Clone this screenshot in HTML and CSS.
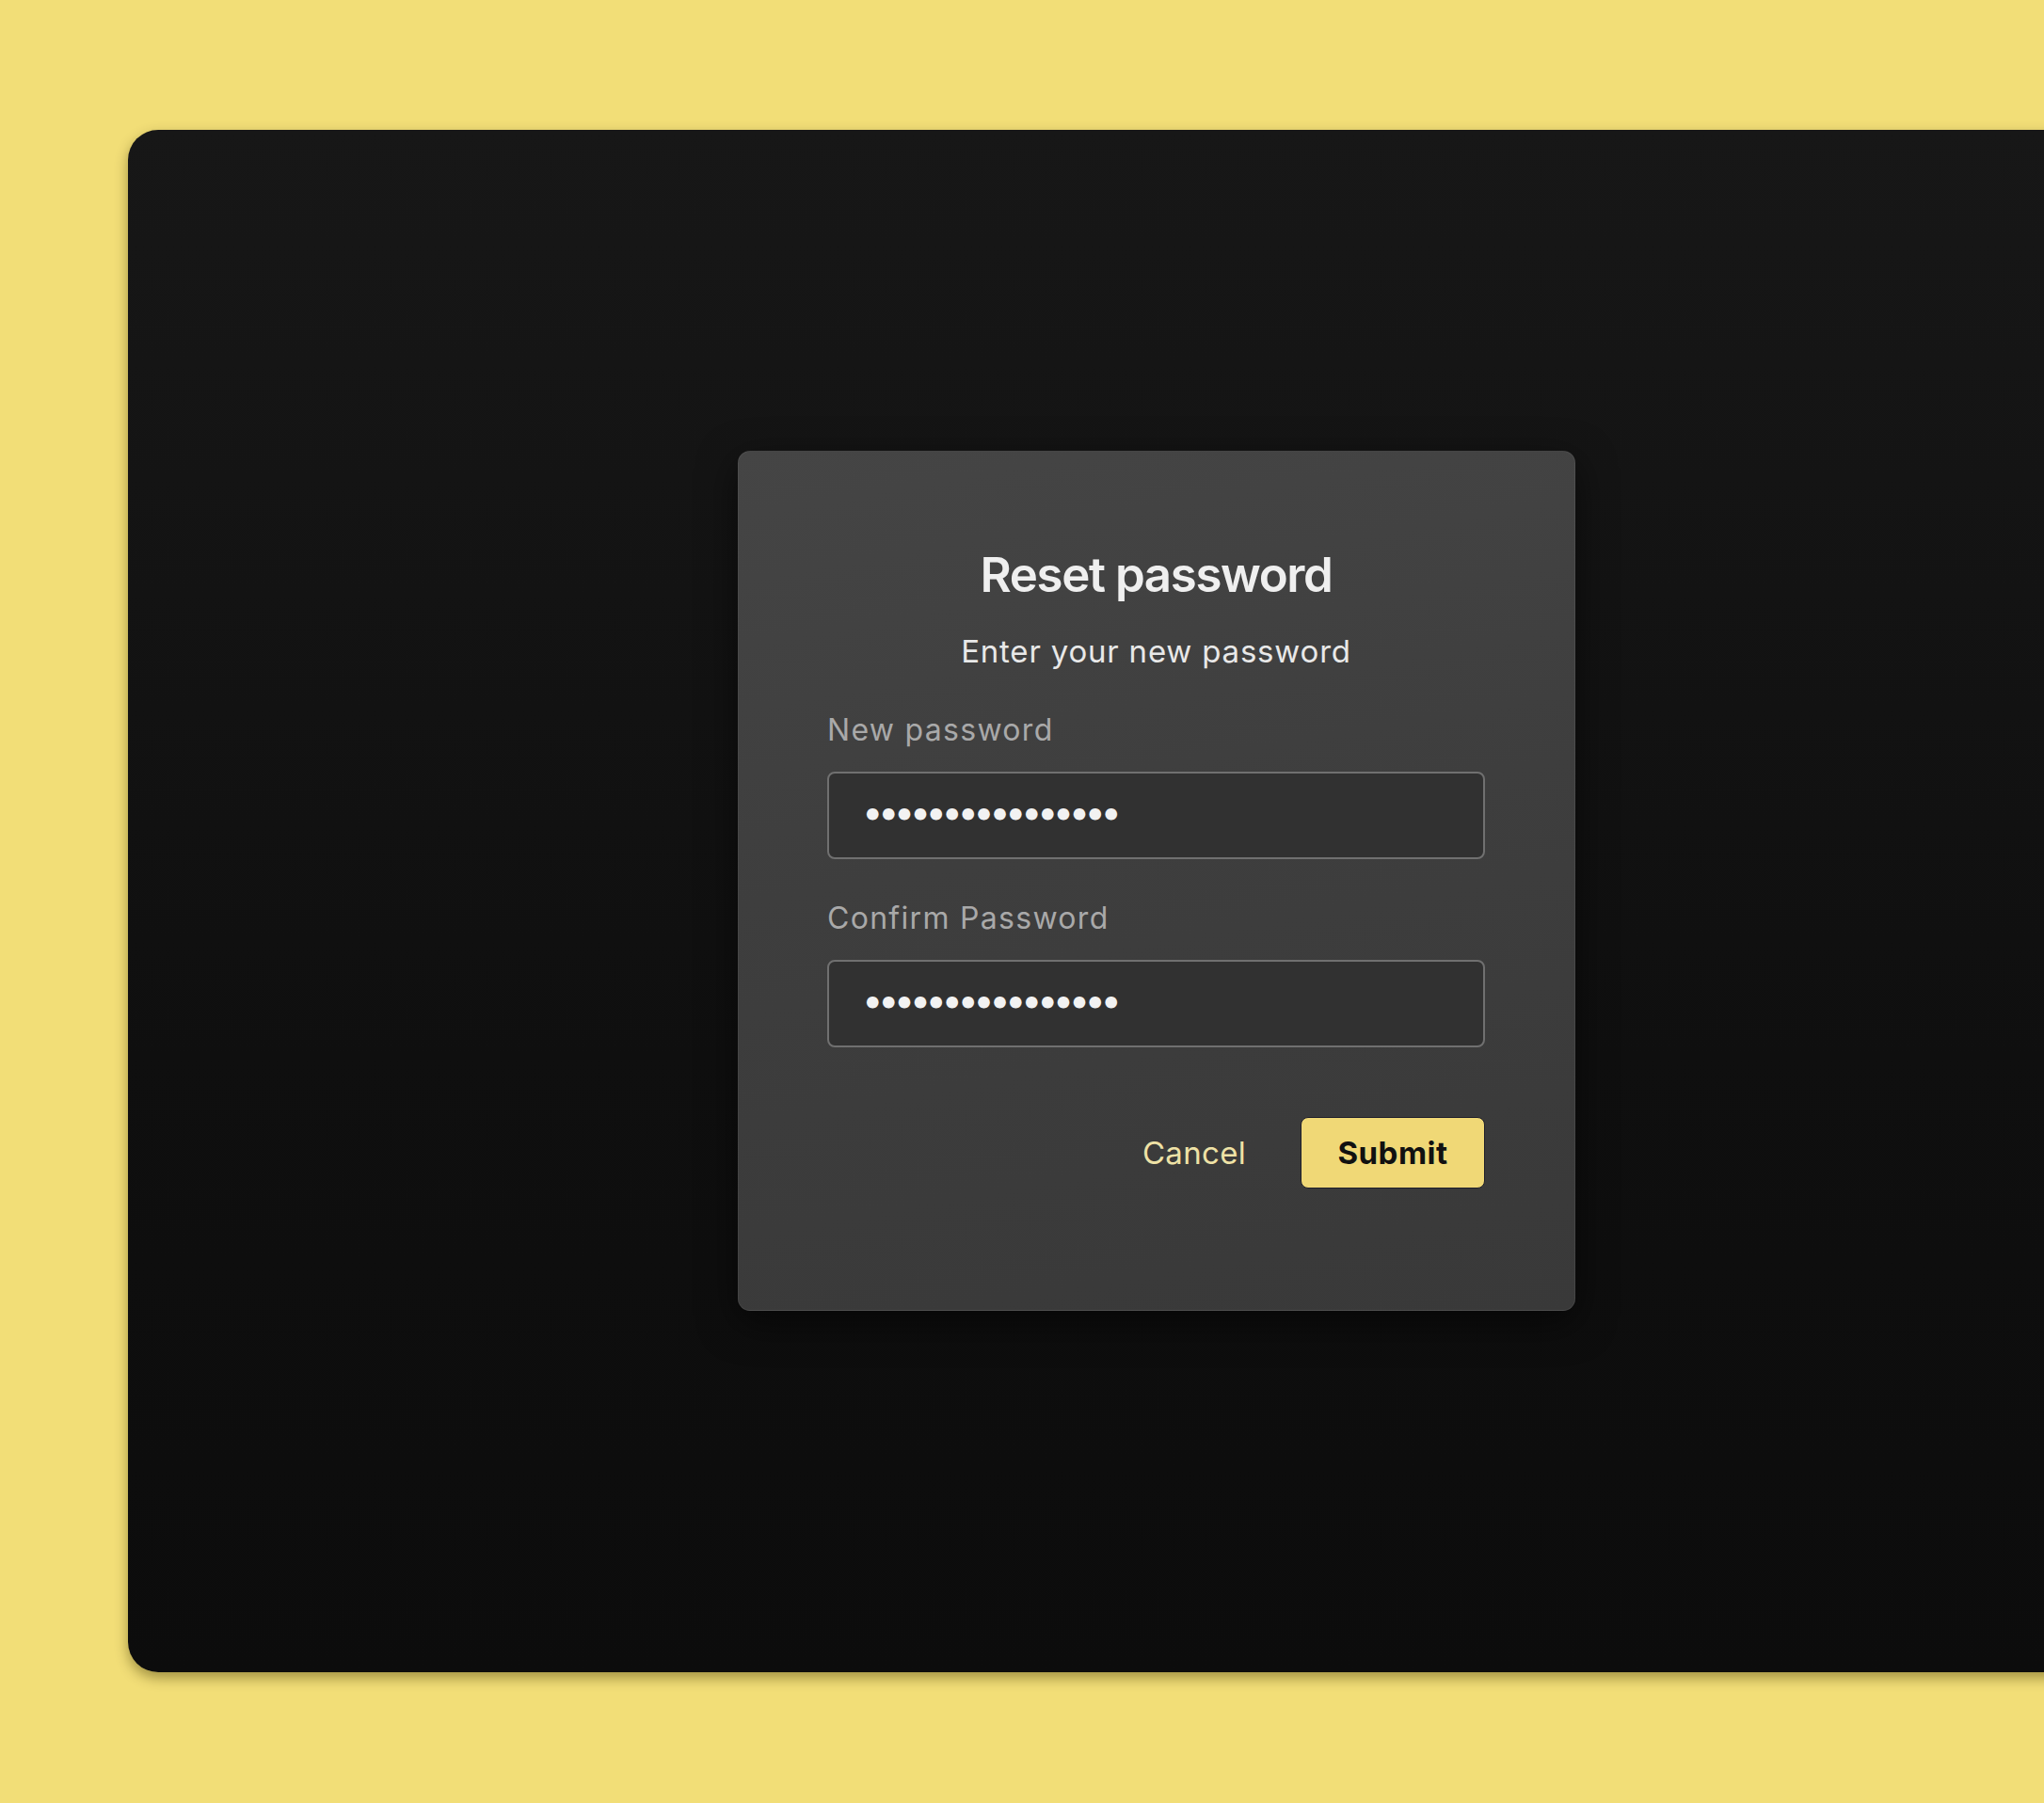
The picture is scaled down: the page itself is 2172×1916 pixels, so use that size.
FILE: index.html
```html
<!DOCTYPE html>
<html lang="en">

<head>
    <meta charset="utf-8">
    <title>Reset password</title>
    <link rel="stylesheet" href="styles.css">
</head>

<body>
    <div class="screen">
        <form class="dialog" onsubmit="return false;">
            <h2 class="dialog-title">Reset password</h2>
            <p class="dialog-subtitle">Enter your new password</p>

            <label class="field-label" for="new-password">New password</label>
            <input class="field-input" type="password" id="new-password" name="new-password" value="hunter2hunter2ab">

            <label class="field-label" for="confirm-password">Confirm Password</label>
            <input class="field-input" type="password" id="confirm-password" name="confirm-password" value="hunter2hunter2ab">

            <div class="dialog-actions">
                <button type="button" class="btn-cancel">Cancel</button>
                <button type="submit" class="btn-submit">Submit</button>
            </div>
        </form>
    </div>
</body>

</html>
```

FILE: styles.css
```css
html,
body {
    margin: 0;
    overflow: hidden;
}

body {
    background-color: #f2de77;
    font-family: 'Inter', 'Noto Sans', sans-serif;
    padding: 138px 0 0 136px;
    height: 1916px;
    box-sizing: border-box;
}

/* dark app window, runs off the right edge */
.screen {
    width: 2200px;
    height: 1639px;
    box-sizing: border-box;
    padding: 341px 0 0 648px;
    border-radius: 32px;
    background: linear-gradient(180deg, #171717 0%, #0f0f0f 60%, #0c0c0c 100%);
    box-shadow: 0 6px 14px rgba(60, 50, 0, 0.45);
}

.dialog {
    width: 890px;
    height: 914px;
    box-sizing: border-box;
    padding: 99px 95px 0 94px;
    display: flex;
    flex-direction: column;
    border: 1px solid rgba(255, 255, 255, 0.06);
    border-radius: 13px;
    background: linear-gradient(170deg, #454545 0%, #3e3e3e 45%, #393939 100%);
    box-shadow: 0 12px 40px rgba(0, 0, 0, 0.55);
}

.dialog-title {
    margin: 0;
    font-size: 51px;
    line-height: 64px;
    font-weight: 600;
    color: #efefef;
    text-align: center;
    letter-spacing: -1.4px;
}

.dialog-subtitle {
    margin: 29px 0 44px;
    font-size: 33px;
    line-height: 40px;
    color: #e8e8e8;
    text-align: center;
    letter-spacing: 0.8px;
}

.field-label {
    font-size: 32px;
    line-height: 40px;
    color: #a9a9a9;
    letter-spacing: 1.3px;
    margin-bottom: 24px;
}

/* bullets: large glyph, pulled together */
.field-input {
    height: 93px;
    box-sizing: border-box;
    padding: 0 36px 8px 35px;
    border: 2px solid #707070;
    border-radius: 8px;
    background-color: #313131;
    color: #f2f2f2;
    font-family: 'Inter', sans-serif;
    font-size: 40px;
    letter-spacing: -5.6px;
    outline: none;
    margin-bottom: 43px;
}

.dialog-actions {
    display: flex;
    justify-content: flex-end;
    align-items: center;
    gap: 58px;
    margin-top: 31px;
}

.btn-cancel,
.btn-submit {
    font-family: 'Inter', sans-serif;
    font-size: 33px;
    cursor: pointer;
}

.btn-cancel {
    background: none;
    border: none;
    padding: 0;
    color: #efe2a6;
    letter-spacing: 0.3px;
}

.btn-submit {
    width: 196px;
    height: 76px;
    border: 1px solid #1e1e2a;
    border-radius: 8px;
    background-color: #f0d876;
    color: #111111;
    font-weight: 700;
    letter-spacing: 0.5px;
}
```
